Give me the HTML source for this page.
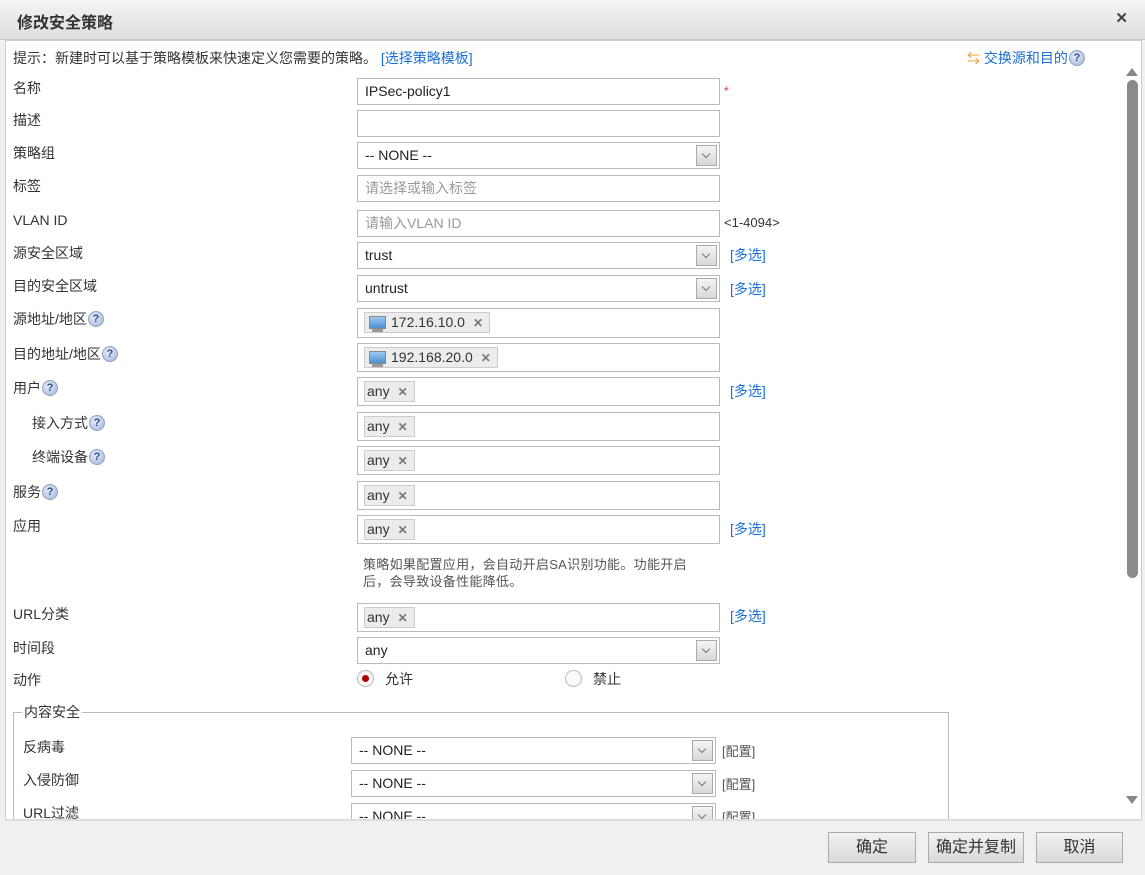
<!DOCTYPE html>
<html><head><meta charset="utf-8"><style>
*{box-sizing:border-box;margin:0;padding:0}
body{width:1145px;height:875px;overflow:hidden;background:#f0f0f0;font-family:"Liberation Sans","Noto Sans CJK SC",sans-serif;font-size:14px;color:#333;position:relative}
.a{position:absolute}
.title{left:0;top:0;width:1145px;height:40px;background:linear-gradient(#f4f4f4,#dedede);border-bottom:1px solid #c8c8c8}
.title span{position:absolute;left:17px;top:9px;font-size:16px;font-weight:bold;color:#333}
.close{right:17px;top:9px;font-size:15px;color:#444;font-weight:bold}
.content{left:5px;top:40px;width:1137px;height:780px;background:#fff;border:1px solid #ccc;overflow:hidden}
.lbl{font-size:14px;color:#333;line-height:16px}
.in{width:363px;height:27px;border:1px solid #bbb;background:#fff;padding:0 7px;line-height:25px;font-size:14px;color:#222}
.ph{color:#999}
.sel .arr{position:absolute;right:2px;top:2px;width:21px;height:21px;border:1px solid #aaa;background:linear-gradient(#f4f4f4,#d8d8d8)}
.sel .arr:after{content:"";position:absolute;left:6px;top:5px;width:5px;height:5px;border-right:1.5px solid #777;border-bottom:1.5px solid #777;transform:rotate(45deg)}
.tag{display:inline-block;margin-top:3px;margin-left:-1px;height:21px;line-height:19px;border:1px solid #ccc;background:#ececec;padding:0 6px 0 2px;font-size:14px;color:#333;vertical-align:top}
.tag b{color:#777;margin-left:8px;font-size:12px}
.link{color:#1a6fd6}
.q{display:inline-block;width:16px;height:16px;border-radius:50%;background:radial-gradient(circle at 40% 35%,#e8eefa,#9fb2d6);border:1px solid #8ea2c8;color:#2f4f8f;font-size:11px;font-weight:bold;text-align:center;line-height:14px;vertical-align:top;margin-left:1px;margin-top:0}
.mon{display:inline-block;width:17px;height:13px;background:linear-gradient(#9cc9f0,#4d8fcf);border:1px solid #888;margin:0 5px 0 2px;vertical-align:-2px;position:relative}
.mon:after{content:"";position:absolute;left:2px;top:12px;width:11px;height:3px;background:#999}
.btn{top:832px;height:31px;border:1px solid #aaa;background:linear-gradient(#f2f2f2,#d9d9d9);font-size:16px;color:#333;text-align:center;line-height:29px}
</style></head><body>
<div class="a title"><span>修改安全策略</span></div>
<div class="a close">✕</div>
<div class="a content"></div>
<div class="a" style="left:1126px;top:68px;width:0;height:0;border-left:6px solid transparent;border-right:6px solid transparent;border-bottom:8px solid #888"></div>
<div class="a" style="left:1127px;top:80px;width:11px;height:498px;background:#8a8a8a;border-radius:6px"></div>
<div class="a" style="left:1126px;top:796px;width:0;height:0;border-left:6px solid transparent;border-right:6px solid transparent;border-top:8px solid #888"></div>

<div class="a lbl" style="left:13px;top:50px">提示：新建时可以基于策略模板来快速定义您需要的策略。 <span class="link">[选择策略模板]</span></div>
<div class="a lbl" style="left:967px;top:50px"><span style="color:#e8962a;font-size:13px">⇆</span> <span class="link">交换源和目的</span><span class="q">?</span></div>

<div class="a lbl" style="left:13px;top:80px">名称</div>
<div class="a in" style="left:357px;top:78px">IPSec-policy1</div>
<div class="a" style="left:724px;top:84px;color:#e33;font-size:12px">*</div>

<div class="a lbl" style="left:13px;top:112px">描述</div>
<div class="a in" style="left:357px;top:110px"></div>

<div class="a lbl" style="left:13px;top:145px">策略组</div>
<div class="a in sel" style="left:357px;top:142px">-- NONE --<div class="arr"></div></div>

<div class="a lbl" style="left:13px;top:178px">标签</div>
<div class="a in ph" style="left:357px;top:175px">请选择或输入标签</div>

<div class="a lbl" style="left:13px;top:212px">VLAN ID</div>
<div class="a in ph" style="left:357px;top:210px">请输入VLAN ID</div>
<div class="a" style="left:724px;top:215px;font-size:13px">&lt;1-4094&gt;</div>

<div class="a lbl" style="left:13px;top:245px">源安全区域</div>
<div class="a in sel" style="left:357px;top:242px">trust<div class="arr"></div></div>
<div class="a link" style="left:730px;top:245px">[多选]</div>

<div class="a lbl" style="left:13px;top:278px">目的安全区域</div>
<div class="a in sel" style="left:357px;top:275px">untrust<div class="arr"></div></div>
<div class="a link" style="left:730px;top:279px">[多选]</div>

<div class="a lbl" style="left:13px;top:311px">源地址/地区<span class="q">?</span></div>
<div class="a in" style="left:357px;top:308px;height:30px"><span class="tag"><span class="mon"></span>172.16.10.0<b>✕</b></span></div>

<div class="a lbl" style="left:13px;top:346px">目的地址/地区<span class="q">?</span></div>
<div class="a in" style="left:357px;top:343px;height:29px"><span class="tag"><span class="mon"></span>192.168.20.0<b>✕</b></span></div>

<div class="a lbl" style="left:13px;top:380px">用户<span class="q">?</span></div>
<div class="a in" style="left:357px;top:377px;height:29px"><span class="tag">any<b>✕</b></span></div>
<div class="a link" style="left:730px;top:381px">[多选]</div>

<div class="a lbl" style="left:32px;top:415px">接入方式<span class="q">?</span></div>
<div class="a in" style="left:357px;top:412px;height:29px"><span class="tag">any<b>✕</b></span></div>

<div class="a lbl" style="left:32px;top:449px">终端设备<span class="q">?</span></div>
<div class="a in" style="left:357px;top:446px;height:29px"><span class="tag">any<b>✕</b></span></div>

<div class="a lbl" style="left:13px;top:484px">服务<span class="q">?</span></div>
<div class="a in" style="left:357px;top:481px;height:29px"><span class="tag">any<b>✕</b></span></div>

<div class="a lbl" style="left:13px;top:518px">应用</div>
<div class="a in" style="left:357px;top:515px;height:29px"><span class="tag">any<b>✕</b></span></div>
<div class="a link" style="left:730px;top:519px">[多选]</div>

<div class="a" style="left:363px;top:556px;width:368px;font-size:13px;color:#555;line-height:17px;letter-spacing:0.3px">策略如果配置应用，会自动开启SA识别功能。功能开启<br>后，会导致设备性能降低。</div>

<div class="a lbl" style="left:13px;top:606px">URL分类</div>
<div class="a in" style="left:357px;top:603px;height:29px"><span class="tag">any<b>✕</b></span></div>
<div class="a link" style="left:730px;top:606px">[多选]</div>

<div class="a lbl" style="left:13px;top:640px">时间段</div>
<div class="a in sel" style="left:357px;top:637px">any<div class="arr"></div></div>

<div class="a lbl" style="left:13px;top:672px">动作</div>
<div class="a" style="left:357px;top:670px;width:17px;height:17px;border-radius:50%;border:1px solid #bbb;background:#f6f6f6"><div style="position:absolute;left:4px;top:4px;width:7px;height:7px;border-radius:50%;background:#a00"></div></div>
<div class="a lbl" style="left:385px;top:671px">允许</div>
<div class="a" style="left:565px;top:670px;width:17px;height:17px;border-radius:50%;border:1px solid #bbb;background:#fafafa"></div>
<div class="a lbl" style="left:593px;top:671px">禁止</div>

<div class="a" style="left:6px;top:700px;width:1115px;height:119px;overflow:hidden">
<div class="a" style="left:7px;top:12px;width:936px;height:120px;border:1px solid #bbb;border-bottom:none"></div>
<div class="a lbl" style="left:16px;top:4px;background:#fff;padding:0 2px">内容安全</div>
<div class="a lbl" style="left:17px;top:39px">反病毒</div>
<div class="a in sel" style="left:345px;top:37px;width:365px">-- NONE --<div class="arr"></div></div>
<div class="a" style="left:716px;top:41px;font-size:13px;color:#555">[配置]</div>
<div class="a lbl" style="left:17px;top:72px">入侵防御</div>
<div class="a in sel" style="left:345px;top:70px;width:365px">-- NONE --<div class="arr"></div></div>
<div class="a" style="left:716px;top:74px;font-size:13px;color:#555">[配置]</div>
<div class="a lbl" style="left:17px;top:105px">URL过滤</div>
<div class="a in sel" style="left:345px;top:103px;width:365px">-- NONE --<div class="arr"></div></div>
<div class="a" style="left:716px;top:107px;font-size:13px;color:#555">[配置]</div>
</div>
<div class="a" style="left:5px;top:819px;width:1137px;height:2px;background:#ddd"></div>

<div class="a btn" style="left:828px;width:88px">确定</div>
<div class="a btn" style="left:928px;width:96px">确定并复制</div>
<div class="a btn" style="left:1036px;width:87px">取消</div>
</body></html>
